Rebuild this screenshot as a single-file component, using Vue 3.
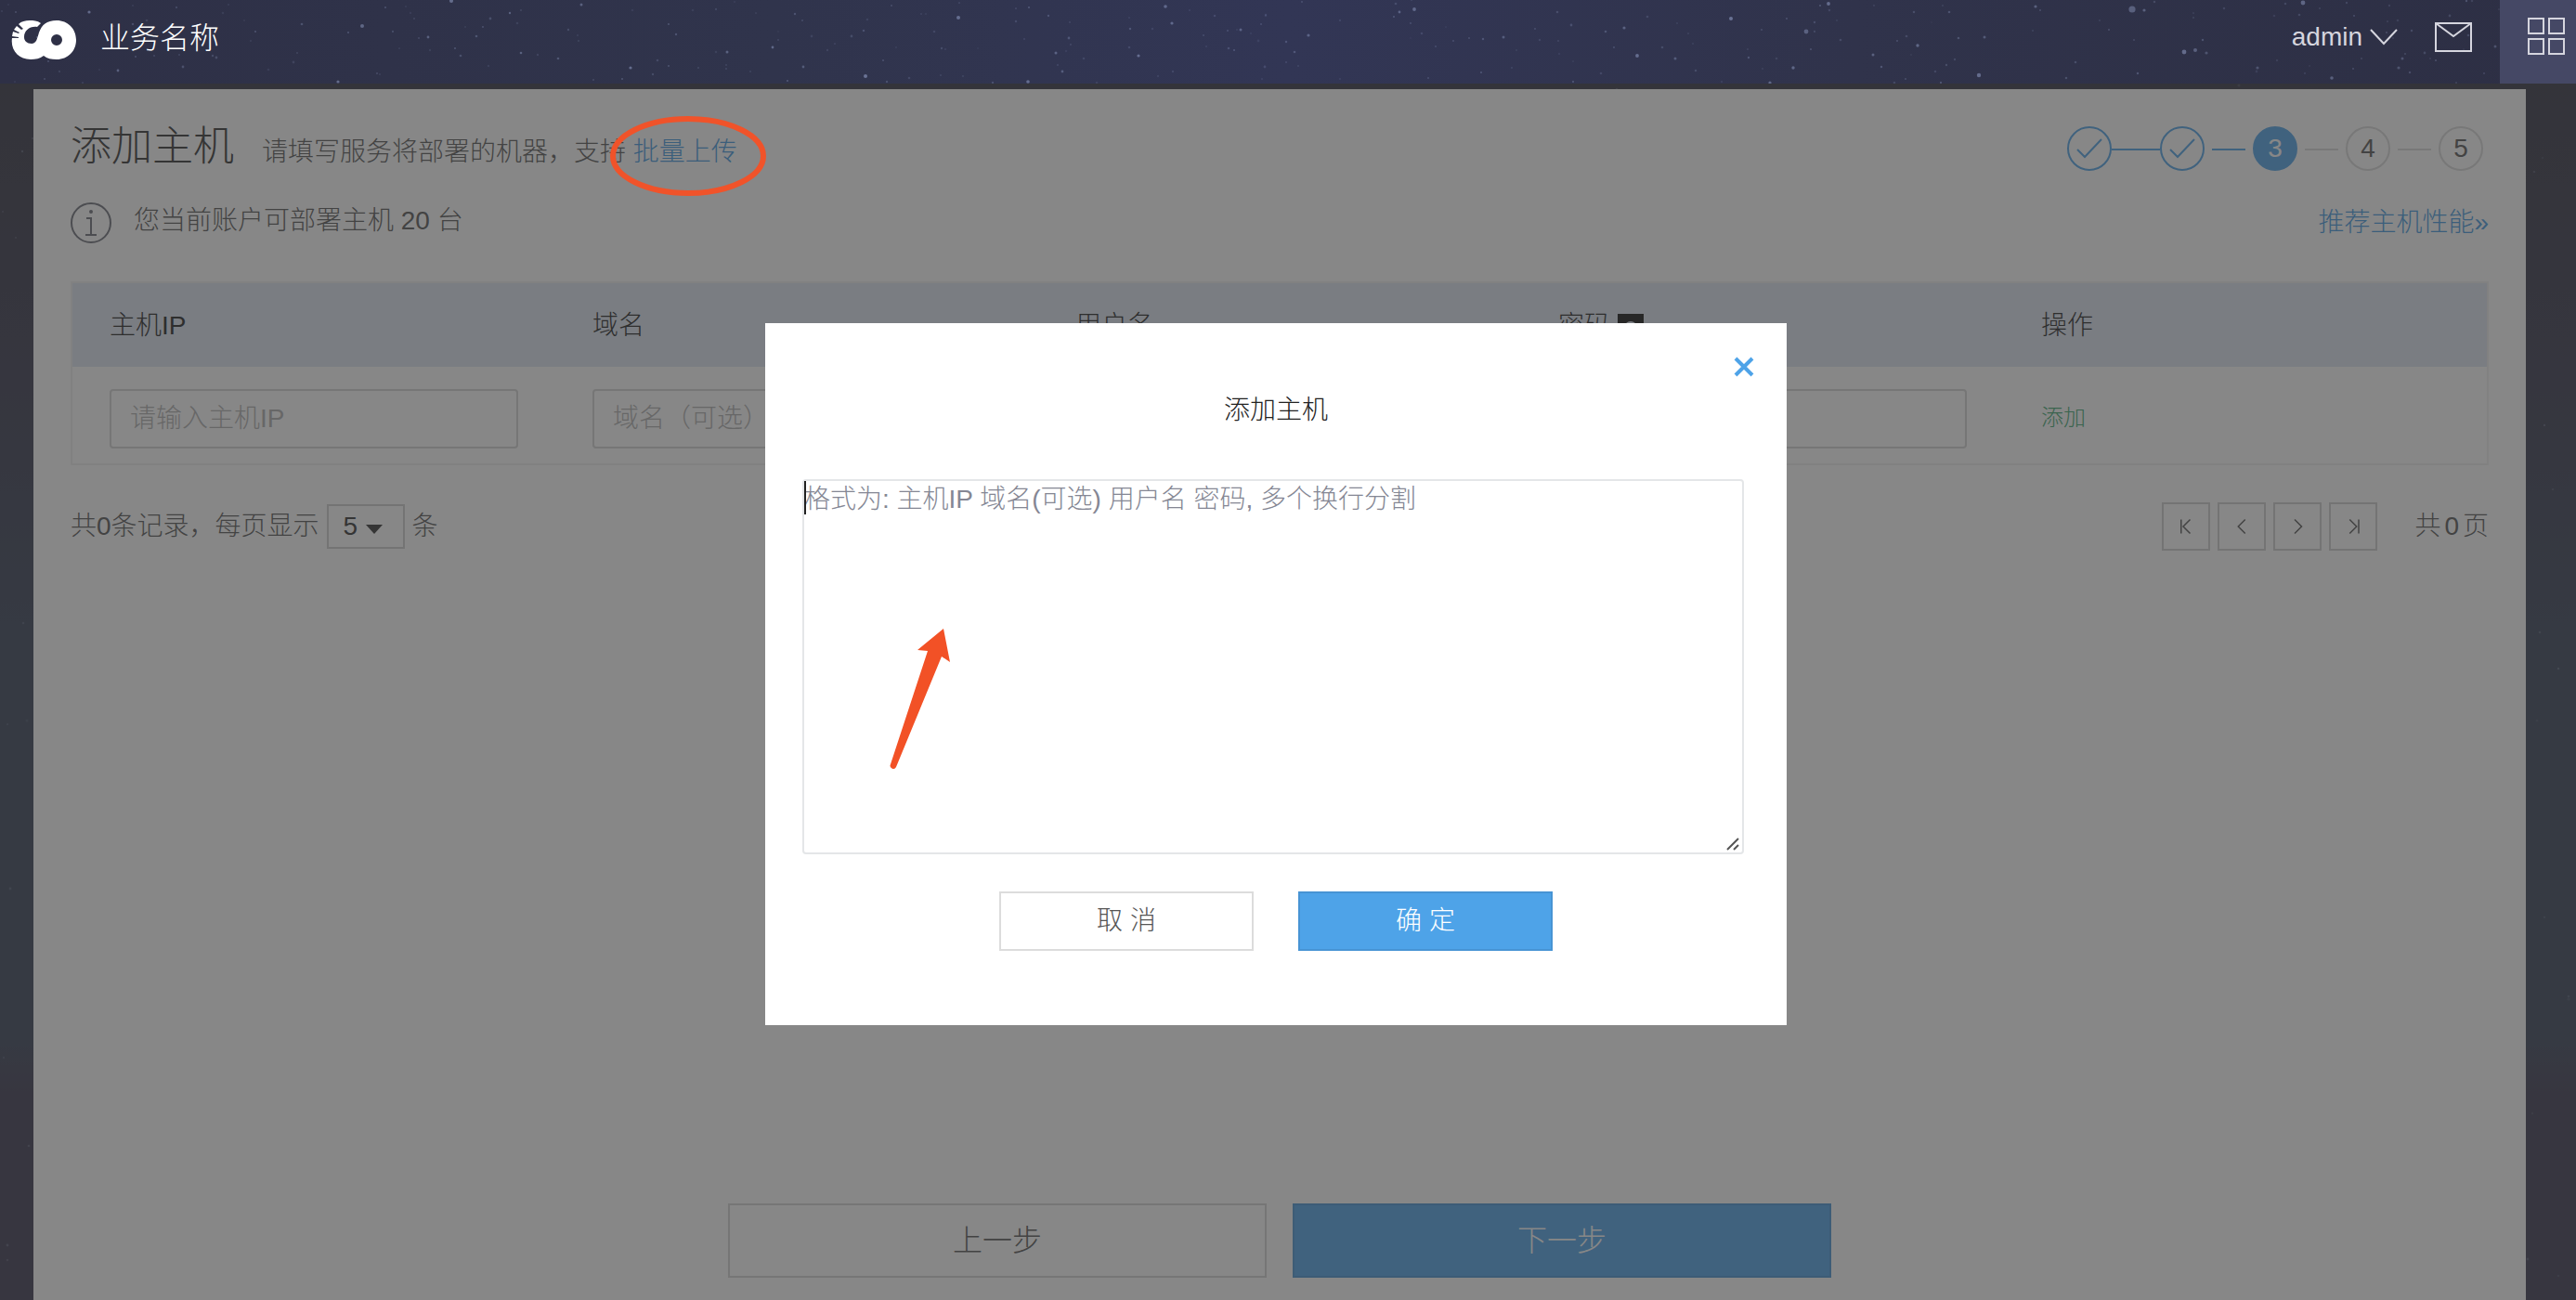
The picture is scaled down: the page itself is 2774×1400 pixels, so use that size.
<script setup>
import { ref } from 'vue'

const columns = ['主机IP', '域名', '用户名', '密码', '操作']
const host = ref({ ip: '', domain: '', user: '', password: '' })
const pageSize = ref('5')
const bulkText = ref('')

const pagers = [
  { label: '首页', path: 'M5 2v20M18 2 8 12l10 10' },
  { label: '上一页', path: 'M17 2 7 12l10 10' },
  { label: '下一页', path: 'M8 2l10 10L8 22' },
  { label: '末页', path: 'M20 2v20M7 2l10 10L7 22' },
]

const steps = [
  { n: 1, state: 'done' },
  { n: 2, state: 'done' },
  { n: 3, state: 'current' },
  { n: 4, state: 'todo' },
  { n: 5, state: 'todo' },
]

// Bright stars of the night sky: x, y, radius, opacity
const brightStars = [
  [96, 13, 1.6, 0.5], [127, 76, 1.4, 0.4], [364, 88, 1.6, 0.5], [390, 28, 2, 0.45], [486, 1, 2, 0.5],
  [461, 40, 1.4, 0.4], [549, 14, 1.2, 0.4], [561, 57, 1.3, 0.4], [626, 5, 1.5, 0.4], [679, 73, 1.6, 0.5],
  [783, 56, 1.5, 0.4], [832, 51, 1.4, 0.45], [865, 72, 1.4, 0.35], [932, 82, 2, 0.55], [1032, 19, 2, 0.5],
  [1107, 88, 1.8, 0.5], [1137, 57, 1.5, 0.4], [1144, 77, 1.4, 0.35], [1226, 60, 1.6, 0.5], [1255, 7, 1.8, 0.45],
  [1262, 25, 1.6, 0.45], [1336, 32, 1.5, 0.4], [1409, 38, 1.6, 0.4], [1523, 10, 1.9, 0.45], [1507, 13, 1.4, 0.4],
  [1619, 40, 1.5, 0.35], [1749, 30, 1.6, 0.4], [1763, 60, 1.9, 0.5], [1804, 63, 1.5, 0.35], [1864, 20, 2, 0.55],
  [1906, 89, 1.6, 0.45], [1931, 73, 1.7, 0.45], [1945, 34, 2.4, 0.4], [1969, 4, 1.9, 0.5], [2065, 49, 1.7, 0.45],
  [2017, 59, 1.5, 0.4], [2131, 81, 2.2, 0.5], [2137, 40, 1.5, 0.35], [2192, 7, 1.6, 0.4], [2296, 10, 3.6, 0.4],
  [2309, 11, 1.6, 0.4], [2352, 56, 2.4, 0.5], [2364, 54, 2, 0.4], [2376, 57, 1.6, 0.3], [2431, 73, 1.6, 0.3],
  [2480, 3, 2.4, 0.45], [2511, 84, 1.8, 0.4], [2587, 63, 1.5, 0.3], [2583, 73, 1.6, 0.3], [2687, 50, 1.5, 0.3],
].map(([x, y, r, o]) => [x, y, r, o * 0.8])

// Faint stars come from a seeded generator so that the sky is always the same
function scatter(count, width, height, seed) {
  let s = seed
  const next = () => (s = (s * 16807) % 2147483647) / 2147483647
  return Array.from({ length: count }, () => [
    Math.round(next() * width),
    Math.round(next() * height),
    0.8 + next() * 0.6,
    0.08 + next() * 0.17,
  ])
}
const headerStars = brightStars.concat(scatter(260, 2774, 90, 77))
const skyStars = scatter(600, 2774, 1310, 4211)
</script>

<template>
  <div class="page">
    <svg class="sky" viewBox="0 0 2774 1310" preserveAspectRatio="xMidYMin slice" aria-hidden="true">
      <circle v-for="(s, i) in skyStars" :key="i" :cx="s[0]" :cy="s[1]" :r="s[2] + 0.2" :opacity="s[3]" fill="#c4d0f0" />
    </svg>

    <header class="topbar">
      <svg class="stars" viewBox="0 0 2774 90" preserveAspectRatio="xMidYMid slice" aria-hidden="true">
        <circle v-for="(s, i) in headerStars" :key="i" :cx="s[0]" :cy="s[1]" :r="s[2]" :opacity="s[3]" fill="#b4c4f0" />
      </svg>
      <svg class="logo" viewBox="0 0 70 42" aria-hidden="true">
        <path fill="#fff" fill-rule="evenodd" d="M32 3C28 0 24 0 20 0 15 0 11 1 8 4L13 9 11 10 6 6 3 10 9 13 8 14 2 12 1 17 8 18V19L1 19C-1 32 8 42 21 42 26 42 31 41 35 38 39 41 43 42 49 42 61 42 70 33 70 21 70 9 61 0 49 0 38 0 33 5 30 13 28 20 27 25 22 25 17 25 14 22 14 18 14 11 20 6 28 7ZM49 15A6 6 0 1 1 49 27 6 6 0 1 1 49 15Z" />
      </svg>
      <span class="brand">业务名称</span>
      <nav class="tools">
        <button type="button" class="user">
          admin
          <svg width="30" height="18" viewBox="0 0 30 18" aria-hidden="true"><path d="M1 1 15 16 29 1" /></svg>
        </button>
        <button type="button" class="mail" aria-label="消息">
          <svg width="40" height="32" viewBox="0 0 40 32" aria-hidden="true"><path d="M1 1h38v30H1ZM1 1l19 14L39 1" /></svg>
        </button>
        <button type="button" class="apps" aria-label="应用">
          <svg width="40" height="40" viewBox="0 0 40 40" aria-hidden="true"><path d="M1 1h16v16H1ZM23 1h16v16H23ZM1 23h16v16H1ZM23 23h16v16H23Z" /></svg>
        </button>
      </nav>
    </header>

    <main class="panel">
      <div class="heading">
        <h1>添加主机</h1>
        <p>请填写服务将部署的机器，支持 <a href="#bulk">批量上传</a></p>
        <ol class="steps">
          <li v-for="step in steps" :key="step.n" :class="step.state">
            <svg v-if="step.state === 'done'" width="28" height="22" viewBox="0 0 28 22" aria-hidden="true"><path d="M1 12l8 8L27 1" /></svg>
            <template v-else>{{ step.n }}</template>
          </li>
        </ol>
      </div>

      <div class="notice">
        <svg width="44" height="44" viewBox="0 0 44 44" aria-hidden="true">
          <circle cx="22" cy="22" r="21" />
          <path d="M17 17h5v17M16 35h12" /><circle class="dot" cx="22" cy="10" r="1" />
        </svg>
        <span>您当前账户可部署主机 20 台</span>
        <a href="#spec">推荐主机性能»</a>
      </div>

      <table>
        <thead>
          <tr>
            <th v-for="c in columns" :key="c" scope="col">
              {{ c }}<svg v-if="c === '密码'" class="eye" width="28" height="28" viewBox="0 0 28 28" aria-hidden="true">
                <path class="box" d="M0 0h28v28H0Z" /><circle cx="14" cy="15" r="6" /><circle cx="14" cy="14" r="2" />
              </svg>
            </th>
          </tr>
        </thead>
        <tbody>
          <tr>
            <td><input v-model="host.ip" type="text" placeholder="请输入主机IP" aria-label="主机IP" /></td>
            <td><input v-model="host.domain" type="text" placeholder="域名（可选）" aria-label="域名" /></td>
            <td><input v-model="host.user" type="text" aria-label="用户名" /></td>
            <td><input v-model="host.password" type="password" aria-label="密码" /></td>
            <td><a class="add" href="#add">添加</a></td>
          </tr>
        </tbody>
      </table>

      <div class="paging">
        <label for="page-size">共0条记录，每页显示</label>
        <span class="size">
          <select id="page-size" v-model="pageSize">
            <option>5</option>
            <option>10</option>
            <option>20</option>
          </select>
          <svg width="18" height="10" viewBox="0 0 18 10" aria-hidden="true"><path d="M0 0h18L9 10Z" /></svg>
        </span>
        <span>条</span>
        <div class="pager">
          <button v-for="p in pagers" :key="p.label" type="button" :aria-label="p.label">
            <svg width="18" height="18" viewBox="0 0 24 24" aria-hidden="true"><path :d="p.path" /></svg>
          </button>
        </div>
        <span class="total"><span>共</span><span>0</span><span>页</span></span>
      </div>

      <div class="actions">
        <button type="button">上一步</button>
        <button type="button" class="primary">下一步</button>
      </div>
    </main>

    <div class="overlay">
      <section class="dialog" role="dialog" aria-modal="true" aria-labelledby="dialog-title">
        <button type="button" class="close" aria-label="关闭">
          <svg width="22" height="22" viewBox="0 0 22 22" aria-hidden="true"><path d="M2 2l18 18M20 2 2 20" /></svg>
        </button>
        <h2 id="dialog-title">添加主机</h2>
        <div class="editor">
          <textarea v-model="bulkText" aria-labelledby="dialog-title" placeholder="格式为: 主机IP 域名(可选) 用户名 密码, 多个换行分割"></textarea>
          <i class="caret"></i>
          <svg class="grip" width="14" height="14" viewBox="0 0 14 14" aria-hidden="true"><path d="M1 13 13 1M8 13l5-5" /></svg>
        </div>
        <div class="choices">
          <button type="button">取 消</button>
          <button type="button" class="primary">确 定</button>
        </div>
        <svg class="arrow" width="66" height="152" viewBox="0 0 66 152" aria-hidden="true">
          <path d="M58 0 30 23 41 24 1 146A3 3 0 0 0 7 149L56 30 65 36Z" />
        </svg>
      </section>
    </div>

    <svg class="ring" width="168" height="86" viewBox="0 0 168 86" aria-hidden="true">
      <ellipse cx="84" cy="43" rx="81" ry="40" />
    </svg>
  </div>
</template>

<style>
body {
  margin: 0;
}
</style>

<style scoped>
* {
  box-sizing: border-box;
}
.page {
  position: relative;
  min-height: 100vh;
  background: linear-gradient(#303040 90px, #36364c 30%, #364056 50%, #364056 80%, #38364e 84%, #38364e);
  color: #555;
  font: 300 28px/40px "Liberation Sans", "Noto Sans CJK SC", sans-serif;
}
svg {
  display: block;
  fill: none;
  stroke: currentColor;
  stroke-width: 2;
  flex: none;
}
a {
  color: #4298e0;
  text-decoration: none;
}
button,
input,
select,
textarea {
  font: inherit;
  color: inherit;
  border-radius: 0;
  background: none;
  border: 0;
  margin: 0;
  padding: 0;
}
h1,
h2,
p,
ol {
  margin: 0;
  padding: 0;
  font-weight: 300;
}
.sky {
  position: absolute;
  top: 90px;
  left: 0;
  width: 100%;
  height: calc(100% - 90px);
  stroke: none;
}

/* top bar */
.topbar {
  position: relative;
  z-index: 3;
  display: flex;
  align-items: center;
  height: 90px;
  padding: 0 0 4px 12px;
  background: linear-gradient(90deg, #2e3046, #30344c 30%, #323655 50%, #30334b 72%, #2d2f44);
  color: #fff;
}
.stars {
  position: absolute;
  inset: 0;
  width: 100%;
  height: 100%;
  stroke: none;
}
.logo {
  position: relative;
  width: 70px;
  height: 42px;
  stroke: none;
}
.brand {
  position: relative;
  margin-left: 26px;
  padding-bottom: 4px;
  font-size: 32px;
}
.tools {
  position: relative;
  display: flex;
  align-self: flex-start;
  align-items: flex-start;
  margin-left: auto;
  color: #d5d5de;
}
.tools button {
  display: flex;
  align-items: center;
  height: 80px;
}
.user {
  gap: 8px;
}
.mail {
  margin: 0 30px 0 40px;
}
.tools .apps {
  width: 82px;
  height: 90px;
  padding: 0 0 12px 30px;
  background: #454865;
}

/* content panel */
.panel {
  position: relative;
  display: flex;
  flex-direction: column;
  min-height: calc(100vh - 96px);
  margin: 6px 54px 0 36px;
  padding: 30px 40px 24px;
  background: #fff;
}
.heading {
  display: flex;
  align-items: baseline;
  gap: 30px;
  height: 64px;
}
h1 {
  font-size: 44px;
  line-height: 64px;
  color: #333;
}
.steps {
  display: flex;
  align-self: flex-start;
  gap: 52px;
  margin: 10px 6px 0 auto;
  list-style: none;
}
.steps li {
  position: relative;
  display: flex;
  align-items: center;
  justify-content: center;
  width: 48px;
  height: 48px;
  border: 2px solid #d9d9d9;
  border-radius: 50%;
}
.steps li + li::before {
  content: "";
  position: absolute;
  top: 22px;
  right: 54px;
  width: 36px;
  height: 2px;
  background: #d9d9d9;
}
.steps .done {
  border-color: #4ea3e8;
  color: #4ea3e8;
}
.steps .current {
  border-color: #4ea3e8;
  background: #4ea3e8;
  color: #fff;
}
.steps .done + li::before {
  background: #4ea3e8;
}
.steps .done + .done::before {
  right: 46px;
  width: 52px;
}
.notice {
  display: flex;
  align-items: center;
  gap: 24px;
  height: 44px;
  margin-top: 28px;
}
.notice svg {
  color: #6c6e78;
}
.notice .dot {
  fill: currentColor;
}
.notice span {
  padding-bottom: 4px;
}
.notice a {
  margin-left: auto;
}

table {
  width: 100%;
  margin-top: 41px;
  table-layout: fixed;
  border-collapse: separate;
  border-spacing: 0;
  border: 2px solid #f0f0f0;
}
th,
td {
  padding: 0 40px;
  text-align: left;
}
th {
  height: 90px;
  padding-top: 2px;
  background: #dee6f2;
  color: #222;
  font-weight: 300;
}
td {
  padding-top: 24px;
  padding-bottom: 16px;
}
.eye {
  display: inline-block;
  margin-left: 8px;
  vertical-align: -6px;
  stroke: #dee6f2;
}
.eye .box {
  fill: #111;
  stroke: none;
}
td input {
  display: block;
  width: 100%;
  height: 64px;
  padding: 0 20px;
  border: 2px solid #d4d4d4;
  border-radius: 4px;
}
td input::placeholder {
  color: #b0b0b0;
  opacity: 1;
}
td:last-child {
  padding-bottom: 20px;
}
.add {
  font-size: 24px;
  color: #40a872;
}

.paging {
  display: flex;
  align-items: center;
  gap: 8px;
  height: 52px;
  margin-top: 40px;
}
.size {
  position: relative;
  color: #333;
}
select {
  appearance: none;
  display: block;
  width: 84px;
  height: 48px;
  padding-left: 16px;
  border: 2px solid #d0d0d0;
}
.size svg {
  position: absolute;
  top: 22px;
  right: 24px;
  fill: currentColor;
  stroke: none;
  pointer-events: none;
}
.pager {
  display: flex;
  gap: 8px;
  margin-left: auto;
}
.pager button {
  display: flex;
  align-items: center;
  justify-content: center;
  width: 52px;
  height: 52px;
  border: 2px solid #d0d0d0;
}
.total {
  display: flex;
  gap: 4px;
  margin-left: 32px;
}
.actions {
  display: flex;
  justify-content: center;
  gap: 28px;
  margin-top: auto;
}
.actions button {
  width: 580px;
  height: 80px;
  border: 2px solid #d4d4d4;
  font-size: 32px;
}
.actions .primary,
.choices .primary {
  border-color: #4794d4;
  background: #4ea3e8;
  color: #fff;
}

/* dialog */
.overlay {
  position: absolute;
  inset: 0;
  z-index: 2;
  display: flex;
  align-items: center;
  justify-content: center;
  padding: 52px 26px 0 0;
  background: rgba(55, 55, 55, 0.6);
}
.dialog {
  position: relative;
  width: 1100px;
  padding: 74px 40px 80px;
  background: #fff;
}
.close {
  position: absolute;
  top: 36px;
  right: 35px;
  color: #4ea3e8;
}
.close svg {
  stroke-width: 4;
}
h2 {
  font-size: 28px;
  line-height: 40px;
  text-align: center;
  color: #222;
}
.editor {
  position: relative;
  margin: 54px 6px 40px 0;
}
textarea {
  display: block;
  width: 100%;
  height: 404px;
  resize: none;
  border: 2px solid #e4e6e8;
  border-radius: 4px;
  color: #333;
}
textarea::placeholder {
  color: #858794;
  opacity: 1;
}
.caret {
  position: absolute;
  top: 2px;
  left: 2px;
  width: 2px;
  height: 36px;
  background: #222;
}
.grip {
  position: absolute;
  right: 5px;
  bottom: 4px;
  color: #555;
}
.choices {
  display: flex;
  justify-content: center;
  gap: 48px;
}
.choices button {
  width: 274px;
  height: 64px;
  border: 2px solid #dcdcdc;
}
.choices .primary {
  border-color: #4794d4;
}

/* hand-drawn marks */
.arrow,
.ring {
  position: absolute;
  z-index: 4;
  pointer-events: none;
}
.arrow {
  top: 329px;
  left: 134px;
  fill: #f25126;
  stroke: none;
}
.ring {
  top: 125px;
  left: 657px;
  stroke: #f0532a;
  stroke-width: 6;
}
</style>
